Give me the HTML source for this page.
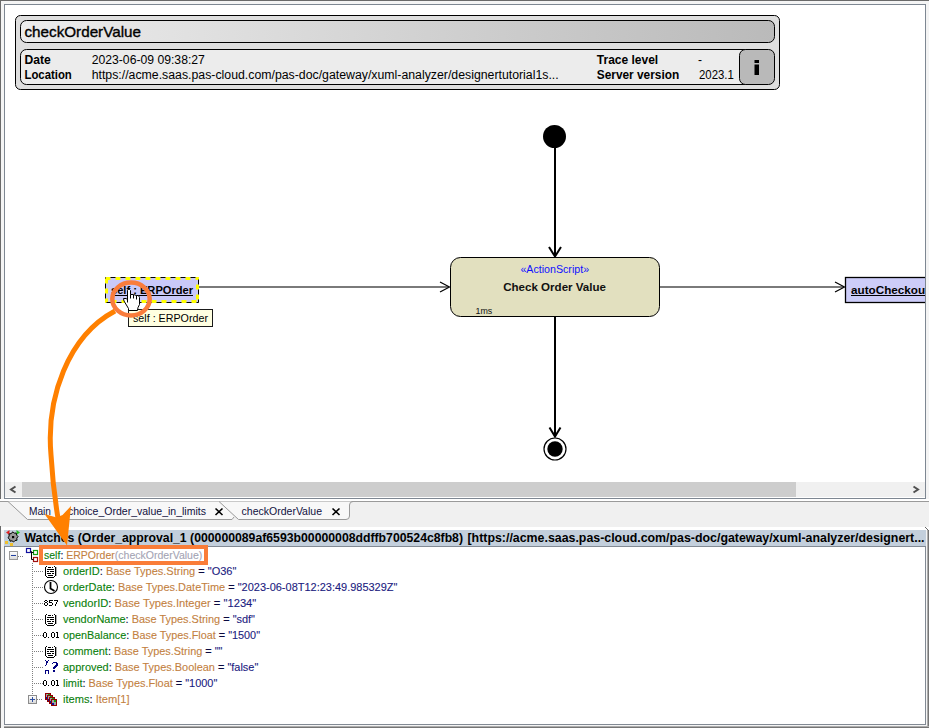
<!DOCTYPE html>
<html><head><meta charset="utf-8">
<style>
html,body{margin:0;padding:0;width:929px;height:728px;overflow:hidden;background:#f4f4f4;}
svg{display:block;}
.g{fill:#0a800a;stroke:#0a800a}.d{fill:#0a0a40;stroke:#0a0a40}.t{fill:#c3813f;stroke:#c3813f}.y{fill:#a4a4b4;stroke:#a4a4b4}.v{fill:#1a2080;stroke:#1a2080}
text{font-family:"Liberation Sans",sans-serif;}
</style></head>
<body>
<svg width="929" height="728" viewBox="0 0 929 728">
<defs>
<linearGradient id="tgrad" x1="0" x2="1" y1="0" y2="0">
<stop offset="0" stop-color="#ececec"/><stop offset="1" stop-color="#bababa"/>
</linearGradient>
<linearGradient id="pbox" x1="0" x2="0" y1="0" y2="1">
<stop offset="0" stop-color="#ffffff"/><stop offset="1" stop-color="#d8d8d8"/>
</linearGradient>
<linearGradient id="botgrad" x1="0" x2="0" y1="0" y2="1">
<stop offset="0" stop-color="#c8c8c8"/><stop offset="1" stop-color="#5a5a5a"/>
</linearGradient>
<linearGradient id="rgtgrad" x1="0" x2="1" y1="0" y2="0">
<stop offset="0" stop-color="#c8c8c8"/><stop offset="1" stop-color="#5a5a5a"/>
</linearGradient>
</defs>

<!-- ============ TOP PANEL (canvas) ============ -->
<rect x="0" y="0" width="929" height="1" fill="#6a6a6a"/>
<rect x="0" y="0" width="1" height="521" fill="#6a6a6a"/>
<rect x="4.5" y="4.5" width="921" height="494" fill="#ffffff" stroke="#7e8792" stroke-width="1"/>

<!-- header panel -->
<rect x="15.5" y="15.5" width="764" height="74" rx="5" ry="5" fill="#dedede" stroke="#000" stroke-width="1"/>
<rect x="20.5" y="20.5" width="754" height="22" rx="6" ry="6" fill="url(#tgrad)" stroke="#000" stroke-width="1"/>
<text x="24.5" y="37" font-size="15" fill="#000" stroke="#000" stroke-width="0.35" textLength="116.5" lengthAdjust="spacingAndGlyphs">checkOrderValue</text>
<rect x="20.5" y="49.5" width="740" height="35" rx="6" ry="6" fill="#ececec" stroke="#000" stroke-width="1"/>
<rect x="739.5" y="49.5" width="35" height="35" rx="6" ry="6" fill="#b9b9b9" stroke="#000" stroke-width="1"/>
<rect x="754.5" y="60" width="4.5" height="3" fill="#000"/>
<rect x="754.5" y="64.5" width="4.5" height="10.5" fill="#000"/>


<g font-size="12" font-weight="bold" fill="#000">
<text x="24.5" y="63.5" textLength="26.3" lengthAdjust="spacingAndGlyphs">Date</text>
<text x="24.5" y="78.5" textLength="47.3" lengthAdjust="spacingAndGlyphs">Location</text>
<text x="596.8" y="63.5" textLength="61.4" lengthAdjust="spacingAndGlyphs">Trace level</text>
<text x="596.8" y="78.8" textLength="82.4" lengthAdjust="spacingAndGlyphs">Server version</text>
</g>
<g font-size="12" fill="#000">
<text x="91.7" y="63.5" textLength="113.2" lengthAdjust="spacingAndGlyphs">2023-06-09 09:38:27</text>
<text x="91.7" y="78.5" textLength="467" lengthAdjust="spacingAndGlyphs">https://acme.saas.pas-cloud.com/pas-doc/gateway/xuml-analyzer/designertutorial1s...</text>
<text x="698" y="63.5">-</text>
<text x="699" y="78.8" textLength="34.8" lengthAdjust="spacingAndGlyphs">2023.1</text>
</g>

<!-- diagram: edges -->
<circle cx="554.5" cy="136.5" r="11.5" fill="#000"/>
<line x1="555" y1="148" x2="555" y2="256" stroke="#000" stroke-width="2"/>
<polyline points="549,247 555,256.5 561,247" fill="none" stroke="#000" stroke-width="2"/>
<line x1="555" y1="317" x2="555" y2="436" stroke="#000" stroke-width="2"/>
<polyline points="549.5,427.5 555,436.5 560.5,427.5" fill="none" stroke="#000" stroke-width="2"/>
<circle cx="555" cy="449" r="11" fill="#fff" stroke="#000" stroke-width="1.2"/>
<circle cx="555" cy="449" r="7.7" fill="#000"/>

<line x1="199" y1="287" x2="449" y2="287" stroke="#7a7a7a" stroke-width="2"/>
<polyline points="440,282 449.5,287 440,292" fill="none" stroke="#000" stroke-width="1.2"/>
<line x1="660" y1="287" x2="844" y2="287" stroke="#7a7a7a" stroke-width="2"/>
<polyline points="835,282 844.5,287 835,292" fill="none" stroke="#000" stroke-width="1.2"/>

<!-- action box -->
<rect x="450.5" y="257.5" width="209" height="59" rx="10" ry="10" fill="#e2e0bf" stroke="#000" stroke-width="1"/>
<text x="520.4" y="273" font-size="11" fill="#1010ff" textLength="68.7" lengthAdjust="spacingAndGlyphs">«ActionScript»</text>
<text x="503.2" y="290.6" font-size="11.5" font-weight="bold" fill="#111" textLength="102.8" lengthAdjust="spacingAndGlyphs">Check Order Value</text>
<text x="475.5" y="313.6" font-size="9" fill="#111" textLength="16.8" lengthAdjust="spacingAndGlyphs">1ms</text>

<!-- autoCheckout object (clipped) -->
<svg x="0" y="0" width="925" height="498">
<rect x="845.5" y="277.5" width="120" height="25" fill="#cdcdf9" stroke="#000" stroke-width="1.3"/>
<text x="851" y="293.7" font-size="11" font-weight="bold" fill="#000" textLength="78" lengthAdjust="spacingAndGlyphs">autoCheckout</text>
<rect x="851" y="295" width="80" height="1" fill="#000"/>
</svg>

<!-- self object -->
<clipPath id="objclip"><rect x="105" y="277" width="94" height="26"/></clipPath>
<rect x="105" y="277" width="94" height="26" fill="#c9c9f9"/>
<g clip-path="url(#objclip)">
<rect x="105.5" y="277.5" width="93" height="25" fill="none" stroke="#ffff00" stroke-width="5" stroke-dasharray="5,5" stroke-dashoffset="0"/>
<rect x="105.5" y="277.5" width="93" height="25" fill="none" stroke="#000" stroke-width="1" stroke-dasharray="5,5" stroke-dashoffset="5"/>
</g>
<text x="111" y="293.5" font-size="11" font-weight="bold" fill="#000" textLength="82" lengthAdjust="spacingAndGlyphs">self : ERPOrder</text>
<rect x="111" y="295" width="82" height="1" fill="#000"/>

<!-- tooltip -->
<rect x="128.5" y="309.5" width="84" height="17" fill="#ffffe1" stroke="#1a1a1a" stroke-width="1"/>
<text x="133" y="322.3" font-size="11" fill="#000" textLength="75" lengthAdjust="spacingAndGlyphs">self : ERPOrder</text>

<!-- scrollbar -->
<rect x="5" y="482" width="920" height="15" fill="#f0f0f0"/>
<rect x="22" y="482" width="774" height="15" fill="#cdcdcd"/>
<polyline points="15.5,486.5 11,489.5 15.5,492.5" fill="none" stroke="#505050" stroke-width="2"/>
<polyline points="913.5,486.5 918,489.5 913.5,492.5" fill="none" stroke="#505050" stroke-width="2"/>

<!-- ============ TABS ============ -->
<rect x="0" y="499" width="929" height="28" fill="#f0f0f0"/>
<rect x="0" y="499" width="929" height="2" fill="#ffffff"/>
<rect x="0" y="501" width="929" height="1" fill="#9a9a9a"/>
<rect x="0" y="527" width="929" height="3" fill="#ffffff"/>
<path d="M8,501.5 L27.5,519.5 L232,519.5 L234,517 L219,501.5 Z" fill="#f8f8f8" stroke="none"/>
<path d="M8,501.5 L27.5,519.5 L232,519.5 L234,517" fill="none" stroke="#9a9a9a" stroke-width="1"/>
<path d="M219,501.5 L238.5,519.5 L346,519.5 Q349.5,519.5 349.5,516 L349.5,505 Q349.5,501.5 353,501.5" fill="#f8f8f8" stroke="#9a9a9a" stroke-width="1"/>
<g font-size="10.5" fill="#101040">
<text x="29" y="515" textLength="22" lengthAdjust="spacingAndGlyphs">Main</text>
<text x="68" y="515" textLength="138" lengthAdjust="spacingAndGlyphs">choice_Order_value_in_limits</text>
<text x="241.6" y="515" textLength="80.4" lengthAdjust="spacingAndGlyphs">checkOrderValue</text>
</g>
<g stroke="#000" stroke-width="1.6">
<path d="M215.5,508.5 L222.5,515 M222.5,508.5 L215.5,515"/>
<path d="M332.5,508.5 L339.5,515 M339.5,508.5 L332.5,515"/>
</g>

<!-- ============ WATCHES PANEL ============ -->
<rect x="0" y="526" width="1" height="202" fill="#6a6a6a"/>
<rect x="927" y="530" width="2" height="198" fill="url(#rgtgrad)"/><path d="M925,527 L928.5,530.5" stroke="#666" stroke-width="1"/>
<rect x="4" y="726" width="925" height="2" fill="url(#botgrad)"/>
<rect x="4" y="530" width="922" height="16" fill="#c3cfdc"/>
<rect x="4.5" y="546.5" width="921" height="178" fill="#ffffff" stroke="#828a94" stroke-width="1"/>
<text x="24.5" y="542.3" font-size="12" font-weight="bold" fill="#000" textLength="438.5" lengthAdjust="spacingAndGlyphs">Watches (Order_approval_1 (000000089af6593b00000008ddffb700524c8fb8)</text>
<text x="467.5" y="542.3" font-size="12" font-weight="bold" fill="#000" textLength="457" lengthAdjust="spacingAndGlyphs">[https://acme.saas.pas-cloud.com/pas-doc/gateway/xuml-analyzer/designert...</text>

<!-- watches icon -->
<g>
<path d="M8,541 L12,537 M18,541 L14,537 M7,542 L12,545" stroke="#7fe0e0" stroke-width="1" fill="none"/>
<polygon points="6,532.5 9.5,530 9.5,535" fill="#e02020"/>
<polygon points="20,532.5 16.5,530 16.5,535" fill="#20c020"/>
<path d="M13,531.8 L14.3,533.2 L16.2,533 L16.5,535 L18,536.5 L16.8,538.2 L17,540.2 L15,540.5 L13.6,542 L12,540.8 L10,541.2 L9.6,539.2 L8,537.8 L9.2,536 L9,534 L11,533.6 Z" fill="#9a9a9a" stroke="#000" stroke-width="1"/>
<rect x="12" y="536" width="2.2" height="2.2" fill="#000"/>
<rect x="5" y="541" width="3" height="3" fill="#f0c030"/>
<rect x="10" y="543" width="3" height="3" fill="#f0c030"/>
</g>

<!-- tree lines -->
<g fill="#808080">
<rect x="18" y="556" width="1" height="1"/><rect x="20" y="556" width="1" height="1"/><rect x="22" y="556" width="1" height="1"/>
</g>
<g id="vdots" fill="#808080"></g>

<!-- minus box -->
<rect x="9.5" y="551.5" width="8" height="8" fill="url(#pbox)" stroke="#9a9a9a" stroke-width="1"/>
<rect x="11" y="555" width="5" height="1" fill="#2040a0"/>
<!-- self icon -->
<rect x="26.5" y="548.5" width="4" height="4" fill="#fff" stroke="#1010a0" stroke-width="1.2"/>
<rect x="33.5" y="550.5" width="4" height="4" fill="#fff" stroke="#10a010" stroke-width="1.2"/>
<rect x="33.5" y="557.5" width="4" height="4" fill="#fff" stroke="#a01010" stroke-width="1.2"/>
<path d="M30.5,551.5 L31.5,551.5 L31.5,559.5 L33.5,559.5 M31.5,552.5 L33.5,552.5" fill="none" stroke="#000" stroke-width="1"/>

<!-- row icons -->
<g fill="#000"><rect x="46" y="566" width="1" height="1"/><rect x="54" y="566" width="1" height="1"/><rect x="45" y="567" width="1" height="1"/><rect x="48" y="567" width="3" height="1"/><rect x="52" y="567" width="1" height="1"/><rect x="55" y="567" width="1" height="1"/><rect x="45" y="568" width="1" height="1"/><rect x="55" y="568" width="1" height="1"/><rect x="45" y="569" width="1" height="1"/><rect x="47" y="569" width="7" height="1"/><rect x="55" y="569" width="1" height="1"/><rect x="45" y="570" width="1" height="1"/><rect x="55" y="570" width="1" height="1"/><rect x="45" y="571" width="1" height="1"/><rect x="47" y="571" width="2" height="1"/><rect x="50" y="571" width="4" height="1"/><rect x="55" y="571" width="1" height="1"/><rect x="45" y="572" width="1" height="1"/><rect x="55" y="572" width="1" height="1"/><rect x="45" y="573" width="1" height="1"/><rect x="47" y="573" width="4" height="1"/><rect x="52" y="573" width="2" height="1"/><rect x="55" y="573" width="1" height="1"/><rect x="45" y="574" width="1" height="1"/><rect x="55" y="574" width="1" height="1"/><rect x="45" y="575" width="1" height="1"/><rect x="48" y="575" width="5" height="1"/><rect x="55" y="575" width="1" height="1"/><rect x="46" y="576" width="1" height="1"/><rect x="54" y="576" width="1" height="1"/><rect x="47" y="577" width="7" height="1"/></g><rect x="56" y="567" width="1" height="9" fill="#b0b0b0"/>
<g fill="#000"><rect x="46" y="614" width="1" height="1"/><rect x="54" y="614" width="1" height="1"/><rect x="45" y="615" width="1" height="1"/><rect x="48" y="615" width="3" height="1"/><rect x="52" y="615" width="1" height="1"/><rect x="55" y="615" width="1" height="1"/><rect x="45" y="616" width="1" height="1"/><rect x="55" y="616" width="1" height="1"/><rect x="45" y="617" width="1" height="1"/><rect x="47" y="617" width="7" height="1"/><rect x="55" y="617" width="1" height="1"/><rect x="45" y="618" width="1" height="1"/><rect x="55" y="618" width="1" height="1"/><rect x="45" y="619" width="1" height="1"/><rect x="47" y="619" width="2" height="1"/><rect x="50" y="619" width="4" height="1"/><rect x="55" y="619" width="1" height="1"/><rect x="45" y="620" width="1" height="1"/><rect x="55" y="620" width="1" height="1"/><rect x="45" y="621" width="1" height="1"/><rect x="47" y="621" width="4" height="1"/><rect x="52" y="621" width="2" height="1"/><rect x="55" y="621" width="1" height="1"/><rect x="45" y="622" width="1" height="1"/><rect x="55" y="622" width="1" height="1"/><rect x="45" y="623" width="1" height="1"/><rect x="48" y="623" width="5" height="1"/><rect x="55" y="623" width="1" height="1"/><rect x="46" y="624" width="1" height="1"/><rect x="54" y="624" width="1" height="1"/><rect x="47" y="625" width="7" height="1"/></g><rect x="56" y="615" width="1" height="9" fill="#b0b0b0"/>
<g fill="#000"><rect x="46" y="646" width="1" height="1"/><rect x="54" y="646" width="1" height="1"/><rect x="45" y="647" width="1" height="1"/><rect x="48" y="647" width="3" height="1"/><rect x="52" y="647" width="1" height="1"/><rect x="55" y="647" width="1" height="1"/><rect x="45" y="648" width="1" height="1"/><rect x="55" y="648" width="1" height="1"/><rect x="45" y="649" width="1" height="1"/><rect x="47" y="649" width="7" height="1"/><rect x="55" y="649" width="1" height="1"/><rect x="45" y="650" width="1" height="1"/><rect x="55" y="650" width="1" height="1"/><rect x="45" y="651" width="1" height="1"/><rect x="47" y="651" width="2" height="1"/><rect x="50" y="651" width="4" height="1"/><rect x="55" y="651" width="1" height="1"/><rect x="45" y="652" width="1" height="1"/><rect x="55" y="652" width="1" height="1"/><rect x="45" y="653" width="1" height="1"/><rect x="47" y="653" width="4" height="1"/><rect x="52" y="653" width="2" height="1"/><rect x="55" y="653" width="1" height="1"/><rect x="45" y="654" width="1" height="1"/><rect x="55" y="654" width="1" height="1"/><rect x="45" y="655" width="1" height="1"/><rect x="48" y="655" width="5" height="1"/><rect x="55" y="655" width="1" height="1"/><rect x="46" y="656" width="1" height="1"/><rect x="54" y="656" width="1" height="1"/><rect x="47" y="657" width="7" height="1"/></g><rect x="56" y="647" width="1" height="9" fill="#b0b0b0"/>
<circle cx="51" cy="587" r="6.5" fill="#fff" stroke="#000" stroke-width="1.1"/><path d="M50.5,582 L50.5,588.5 L54.5,591" fill="none" stroke="#000" stroke-width="1.8"/>
<g fill="#000"><rect x="45" y="600" width="2" height="1"/><rect x="44" y="601" width="1" height="1"/><rect x="47" y="601" width="1" height="1"/><rect x="45" y="602" width="2" height="1"/><rect x="44" y="603" width="1" height="1"/><rect x="47" y="603" width="1" height="1"/><rect x="44" y="604" width="1" height="1"/><rect x="47" y="604" width="1" height="1"/><rect x="45" y="605" width="2" height="1"/></g><g fill="#000"><rect x="49" y="600" width="4" height="1"/><rect x="49" y="601" width="1" height="1"/><rect x="49" y="602" width="3" height="1"/><rect x="52" y="603" width="1" height="1"/><rect x="52" y="604" width="1" height="1"/><rect x="49" y="605" width="3" height="1"/></g><g fill="#000"><rect x="54" y="600" width="4" height="1"/><rect x="57" y="601" width="1" height="1"/><rect x="56" y="602" width="1" height="1"/><rect x="56" y="603" width="1" height="1"/><rect x="55" y="604" width="1" height="1"/><rect x="55" y="605" width="1" height="1"/></g>
<g fill="#000"><rect x="44" y="632" width="2" height="1"/><rect x="43" y="633" width="1" height="1"/><rect x="46" y="633" width="1" height="1"/><rect x="43" y="634" width="1" height="1"/><rect x="46" y="634" width="1" height="1"/><rect x="43" y="635" width="1" height="1"/><rect x="46" y="635" width="1" height="1"/><rect x="43" y="636" width="1" height="1"/><rect x="46" y="636" width="1" height="1"/><rect x="44" y="637" width="2" height="1"/></g><rect x="48" y="637" width="1" height="1" fill="#000"/><g fill="#000"><rect x="52" y="632" width="2" height="1"/><rect x="51" y="633" width="1" height="1"/><rect x="54" y="633" width="1" height="1"/><rect x="51" y="634" width="1" height="1"/><rect x="54" y="634" width="1" height="1"/><rect x="51" y="635" width="1" height="1"/><rect x="54" y="635" width="1" height="1"/><rect x="51" y="636" width="1" height="1"/><rect x="54" y="636" width="1" height="1"/><rect x="52" y="637" width="2" height="1"/></g><g fill="#000"><rect x="56" y="632" width="2" height="1"/><rect x="57" y="633" width="1" height="1"/><rect x="57" y="634" width="1" height="1"/><rect x="57" y="635" width="1" height="1"/><rect x="57" y="636" width="1" height="1"/><rect x="56" y="637" width="3" height="1"/></g>
<g fill="#000"><rect x="44" y="680" width="2" height="1"/><rect x="43" y="681" width="1" height="1"/><rect x="46" y="681" width="1" height="1"/><rect x="43" y="682" width="1" height="1"/><rect x="46" y="682" width="1" height="1"/><rect x="43" y="683" width="1" height="1"/><rect x="46" y="683" width="1" height="1"/><rect x="43" y="684" width="1" height="1"/><rect x="46" y="684" width="1" height="1"/><rect x="44" y="685" width="2" height="1"/></g><rect x="48" y="685" width="1" height="1" fill="#000"/><g fill="#000"><rect x="52" y="680" width="2" height="1"/><rect x="51" y="681" width="1" height="1"/><rect x="54" y="681" width="1" height="1"/><rect x="51" y="682" width="1" height="1"/><rect x="54" y="682" width="1" height="1"/><rect x="51" y="683" width="1" height="1"/><rect x="54" y="683" width="1" height="1"/><rect x="51" y="684" width="1" height="1"/><rect x="54" y="684" width="1" height="1"/><rect x="52" y="685" width="2" height="1"/></g><g fill="#000"><rect x="56" y="680" width="2" height="1"/><rect x="57" y="681" width="1" height="1"/><rect x="57" y="682" width="1" height="1"/><rect x="57" y="683" width="1" height="1"/><rect x="57" y="684" width="1" height="1"/><rect x="56" y="685" width="3" height="1"/></g>
<g fill="#000080"><rect x="45" y="660" width="1" height="1"/><rect x="48" y="660" width="1" height="1"/><rect x="46" y="661" width="2" height="1"/><rect x="46" y="662" width="2" height="1"/><rect x="53" y="662" width="4" height="1"/><rect x="46" y="663" width="1" height="1"/><rect x="52" y="663" width="1" height="1"/><rect x="56" y="663" width="2" height="1"/><rect x="46" y="664" width="1" height="1"/><rect x="56" y="664" width="2" height="1"/><rect x="45" y="665" width="1" height="1"/><rect x="55" y="665" width="3" height="1"/><rect x="54" y="666" width="3" height="1"/><rect x="53" y="667" width="3" height="1"/><rect x="53" y="668" width="2" height="1"/><rect x="45" y="670" width="4" height="1"/><rect x="53" y="670" width="2" height="1"/><rect x="45" y="671" width="1" height="1"/><rect x="48" y="671" width="1" height="1"/><rect x="53" y="671" width="2" height="1"/><rect x="45" y="672" width="1" height="1"/><rect x="48" y="672" width="1" height="1"/><rect x="45" y="673" width="1" height="1"/><rect x="48" y="673" width="1" height="1"/></g>
<rect x="45" y="693" width="6" height="7" fill="#a0a0a0"/><rect x="45.5" y="693.5" width="5" height="6" fill="none" stroke="#900000" stroke-width="1"/><rect x="48" y="694" width="2" height="2" fill="#10a010"/><rect x="46" y="697" width="2" height="2" fill="#1010a0"/><rect x="47" y="695" width="6" height="7" fill="#a0a0a0"/><rect x="47.5" y="695.5" width="5" height="6" fill="none" stroke="#900000" stroke-width="1"/><rect x="50" y="696" width="2" height="2" fill="#10a010"/><rect x="48" y="699" width="2" height="2" fill="#1010a0"/><rect x="49" y="697" width="6" height="7" fill="#a0a0a0"/><rect x="49.5" y="697.5" width="5" height="6" fill="none" stroke="#900000" stroke-width="1"/><rect x="52" y="698" width="2" height="2" fill="#10a010"/><rect x="50" y="701" width="2" height="2" fill="#1010a0"/><rect x="51" y="699" width="6" height="7" fill="#a0a0a0"/><rect x="51.5" y="699.5" width="5" height="6" fill="none" stroke="#900000" stroke-width="1"/><rect x="54" y="700" width="2" height="2" fill="#10a010"/><rect x="52" y="703" width="2" height="2" fill="#1010a0"/>
<g fill="#808080"><rect x="32" y="563" width="1" height="1"/><rect x="32" y="565" width="1" height="1"/><rect x="32" y="567" width="1" height="1"/><rect x="32" y="569" width="1" height="1"/><rect x="32" y="571" width="1" height="1"/><rect x="32" y="573" width="1" height="1"/><rect x="32" y="575" width="1" height="1"/><rect x="32" y="577" width="1" height="1"/><rect x="32" y="579" width="1" height="1"/><rect x="32" y="581" width="1" height="1"/><rect x="32" y="583" width="1" height="1"/><rect x="32" y="585" width="1" height="1"/><rect x="32" y="587" width="1" height="1"/><rect x="32" y="589" width="1" height="1"/><rect x="32" y="591" width="1" height="1"/><rect x="32" y="593" width="1" height="1"/><rect x="32" y="595" width="1" height="1"/><rect x="32" y="597" width="1" height="1"/><rect x="32" y="599" width="1" height="1"/><rect x="32" y="601" width="1" height="1"/><rect x="32" y="603" width="1" height="1"/><rect x="32" y="605" width="1" height="1"/><rect x="32" y="607" width="1" height="1"/><rect x="32" y="609" width="1" height="1"/><rect x="32" y="611" width="1" height="1"/><rect x="32" y="613" width="1" height="1"/><rect x="32" y="615" width="1" height="1"/><rect x="32" y="617" width="1" height="1"/><rect x="32" y="619" width="1" height="1"/><rect x="32" y="621" width="1" height="1"/><rect x="32" y="623" width="1" height="1"/><rect x="32" y="625" width="1" height="1"/><rect x="32" y="627" width="1" height="1"/><rect x="32" y="629" width="1" height="1"/><rect x="32" y="631" width="1" height="1"/><rect x="32" y="633" width="1" height="1"/><rect x="32" y="635" width="1" height="1"/><rect x="32" y="637" width="1" height="1"/><rect x="32" y="639" width="1" height="1"/><rect x="32" y="641" width="1" height="1"/><rect x="32" y="643" width="1" height="1"/><rect x="32" y="645" width="1" height="1"/><rect x="32" y="647" width="1" height="1"/><rect x="32" y="649" width="1" height="1"/><rect x="32" y="651" width="1" height="1"/><rect x="32" y="653" width="1" height="1"/><rect x="32" y="655" width="1" height="1"/><rect x="32" y="657" width="1" height="1"/><rect x="32" y="659" width="1" height="1"/><rect x="32" y="661" width="1" height="1"/><rect x="32" y="663" width="1" height="1"/><rect x="32" y="665" width="1" height="1"/><rect x="32" y="667" width="1" height="1"/><rect x="32" y="669" width="1" height="1"/><rect x="32" y="671" width="1" height="1"/><rect x="32" y="673" width="1" height="1"/><rect x="32" y="675" width="1" height="1"/><rect x="32" y="677" width="1" height="1"/><rect x="32" y="679" width="1" height="1"/><rect x="32" y="681" width="1" height="1"/><rect x="32" y="683" width="1" height="1"/><rect x="32" y="685" width="1" height="1"/><rect x="32" y="687" width="1" height="1"/><rect x="32" y="689" width="1" height="1"/><rect x="32" y="691" width="1" height="1"/><rect x="32" y="693" width="1" height="1"/><rect x="34" y="571" width="1" height="1"/><rect x="36" y="571" width="1" height="1"/><rect x="38" y="571" width="1" height="1"/><rect x="40" y="571" width="1" height="1"/><rect x="42" y="571" width="1" height="1"/><rect x="34" y="587" width="1" height="1"/><rect x="36" y="587" width="1" height="1"/><rect x="38" y="587" width="1" height="1"/><rect x="40" y="587" width="1" height="1"/><rect x="42" y="587" width="1" height="1"/><rect x="34" y="603" width="1" height="1"/><rect x="36" y="603" width="1" height="1"/><rect x="38" y="603" width="1" height="1"/><rect x="40" y="603" width="1" height="1"/><rect x="42" y="603" width="1" height="1"/><rect x="34" y="619" width="1" height="1"/><rect x="36" y="619" width="1" height="1"/><rect x="38" y="619" width="1" height="1"/><rect x="40" y="619" width="1" height="1"/><rect x="42" y="619" width="1" height="1"/><rect x="34" y="635" width="1" height="1"/><rect x="36" y="635" width="1" height="1"/><rect x="38" y="635" width="1" height="1"/><rect x="40" y="635" width="1" height="1"/><rect x="42" y="635" width="1" height="1"/><rect x="34" y="651" width="1" height="1"/><rect x="36" y="651" width="1" height="1"/><rect x="38" y="651" width="1" height="1"/><rect x="40" y="651" width="1" height="1"/><rect x="42" y="651" width="1" height="1"/><rect x="34" y="667" width="1" height="1"/><rect x="36" y="667" width="1" height="1"/><rect x="38" y="667" width="1" height="1"/><rect x="40" y="667" width="1" height="1"/><rect x="42" y="667" width="1" height="1"/><rect x="34" y="683" width="1" height="1"/><rect x="36" y="683" width="1" height="1"/><rect x="38" y="683" width="1" height="1"/><rect x="40" y="683" width="1" height="1"/><rect x="42" y="683" width="1" height="1"/><rect x="37" y="699" width="1" height="1"/><rect x="39" y="699" width="1" height="1"/><rect x="41" y="699" width="1" height="1"/></g>
<rect x="28.5" y="695.5" width="8" height="8" fill="url(#pbox)" stroke="#8c8c8c" stroke-width="1"/><rect x="30" y="699" width="5" height="1" fill="#3050a0"/><rect x="32" y="697" width="1" height="5" fill="#3050a0"/>
<!-- rows -->
<g font-size="11" stroke-width="0.1">
<text x="44" y="559" textLength="158.3" lengthAdjust="spacingAndGlyphs"><tspan class="g">self</tspan><tspan class="d">: </tspan><tspan class="t">ERPOrder</tspan><tspan class="y">(checkOrderValue)</tspan></text>
<text x="63" y="575" textLength="173.4" lengthAdjust="spacingAndGlyphs"><tspan class="g">orderID</tspan><tspan class="d">: </tspan><tspan class="t">Base Types.String</tspan><tspan class="d"> = </tspan><tspan class="v">"O36"</tspan></text>
<text x="63" y="591" textLength="334.4" lengthAdjust="spacingAndGlyphs"><tspan class="g">orderDate</tspan><tspan class="d">: </tspan><tspan class="t">Base Types.DateTime</tspan><tspan class="d"> = </tspan><tspan class="v">"2023-06-08T12:23:49.985329Z"</tspan></text>
<text x="63" y="607" textLength="193.3" lengthAdjust="spacingAndGlyphs"><tspan class="g">vendorID</tspan><tspan class="d">: </tspan><tspan class="t">Base Types.Integer</tspan><tspan class="d"> = </tspan><tspan class="v">"1234"</tspan></text>
<text x="63" y="623" textLength="192" lengthAdjust="spacingAndGlyphs"><tspan class="g">vendorName</tspan><tspan class="d">: </tspan><tspan class="t">Base Types.String</tspan><tspan class="d"> = </tspan><tspan class="v">"sdf"</tspan></text>
<text x="63" y="639" textLength="197" lengthAdjust="spacingAndGlyphs"><tspan class="g">openBalance</tspan><tspan class="d">: </tspan><tspan class="t">Base Types.Float</tspan><tspan class="d"> = </tspan><tspan class="v">"1500"</tspan></text>
<text x="63" y="655" textLength="159.5" lengthAdjust="spacingAndGlyphs"><tspan class="g">comment</tspan><tspan class="d">: </tspan><tspan class="t">Base Types.String</tspan><tspan class="d"> = </tspan><tspan class="v">""</tspan></text>
<text x="63" y="671" textLength="195.3" lengthAdjust="spacingAndGlyphs"><tspan class="g">approved</tspan><tspan class="d">: </tspan><tspan class="t">Base Types.Boolean</tspan><tspan class="d"> = </tspan><tspan class="v">"false"</tspan></text>
<text x="63" y="687" textLength="154.3" lengthAdjust="spacingAndGlyphs"><tspan class="g">limit</tspan><tspan class="d">: </tspan><tspan class="t">Base Types.Float</tspan><tspan class="d"> = </tspan><tspan class="v">"1000"</tspan></text>
<text x="63" y="703" textLength="66.6" lengthAdjust="spacingAndGlyphs"><tspan class="g">items</tspan><tspan class="d">: </tspan><tspan class="t">Item[1]</tspan></text>
</g>

<!-- ============ ANNOTATION ============ -->
<rect x="41" y="547" width="165" height="16" fill="none" stroke="#fa7d38" stroke-width="4"/>
<path d="M115,311 C68,336 46,398 51,455 C53,490 56,508 60,530" fill="none" stroke="#ff8000" stroke-width="5"/>
<polygon points="44.5,514 56.5,517.5 62.5,515 71,506 67,545.5" fill="#ff8000"/>
<ellipse cx="131" cy="299" rx="18.7" ry="16.5" fill="none" stroke="#f97c3c" stroke-width="4.5"/>

<!-- hand cursor -->
<path d="M127.5,290.5 L128.5,289.5 L129.5,289.5 L130.5,290.5 L130.5,294.5 L133.5,294.5 L136.5,295.5 L138.5,295.5 L139.5,297.5 L139.5,304.5 L138,307.5 L137.5,310.5 L128.5,310.5 L128.5,308.5 L124,301 L123.5,298.5 L126,298.5 L127.5,299.5 Z" fill="#fff" stroke="#000" stroke-width="1"/>
<path d="M127.5,299 L127.5,302.5 M130.5,294.5 L130.5,298.5 M133.5,295 L133.5,298.5 M136.5,295.5 L136.5,299.5" stroke="#000" stroke-width="1" fill="none"/>
</svg>
</body></html>
